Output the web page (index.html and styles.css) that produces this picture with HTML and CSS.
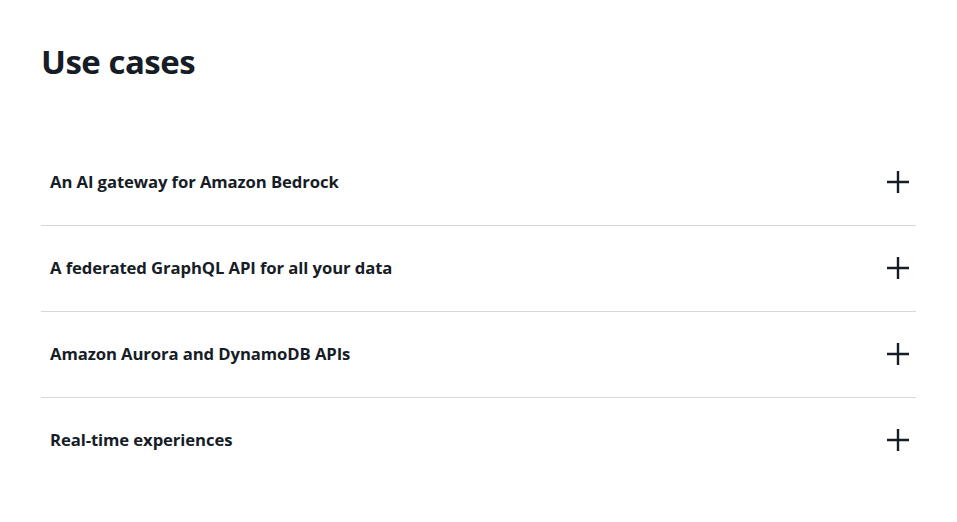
FILE: index.html
```html
<!DOCTYPE html>
<html lang="en">
<head>
<meta charset="utf-8">
<link rel="stylesheet" href="styles.css">
</head>
<body>
<main class="page">
  <h2 class="title">Use cases</h2>
  <ul class="accordion">
    <li class="item"><span class="label">An AI gateway for Amazon Bedrock</span><span class="plus" aria-hidden="true"><svg width="22" height="22" viewBox="0 0 22 22"><path d="M11 0v22M0 11h22" stroke="#161d26" stroke-width="2.4" fill="none"/></svg></span></li>
    <li class="item"><span class="label">A federated GraphQL API for all your data</span><span class="plus" aria-hidden="true"><svg width="22" height="22" viewBox="0 0 22 22"><path d="M11 0v22M0 11h22" stroke="#161d26" stroke-width="2.4" fill="none"/></svg></span></li>
    <li class="item"><span class="label">Amazon Aurora and DynamoDB APIs</span><span class="plus" aria-hidden="true"><svg width="22" height="22" viewBox="0 0 22 22"><path d="M11 0v22M0 11h22" stroke="#161d26" stroke-width="2.4" fill="none"/></svg></span></li>
    <li class="item"><span class="label">Real-time experiences</span><span class="plus" aria-hidden="true"><svg width="22" height="22" viewBox="0 0 22 22"><path d="M11 0v22M0 11h22" stroke="#161d26" stroke-width="2.4" fill="none"/></svg></span></li>
  </ul>
</main>
</body>
</html>
```
FILE: styles.css
```css
html, body {
  margin: 0;
  padding: 0;
  background: #ffffff;
}
body {
  font-family: "Open Sans", "Noto Sans", sans-serif;
  color: #161d26;
}
.page {
  width: 875px;
  padding: 38px 0 0 41px;
}
.title {
  margin: 0;
  font-size: 33px;
  line-height: 48px;
  font-weight: 700;
  letter-spacing: -0.5px;
}
.accordion {
  list-style: none;
  margin: 54px 0 0 0;
  padding: 0;
}
.item {
  display: flex;
  align-items: center;
  justify-content: space-between;
  box-sizing: content-box;
  height: 83px;
  padding: 0 7px 2px 9px;
  border-bottom: 1px solid #d5d7da;
}
.item:last-child {
  border-bottom: none;
}
.label {
  font-size: 16.7px;
  font-weight: 700;
  letter-spacing: -0.1px;
}
.plus {
  display: flex;
  width: 22px;
  height: 22px;
}
```
